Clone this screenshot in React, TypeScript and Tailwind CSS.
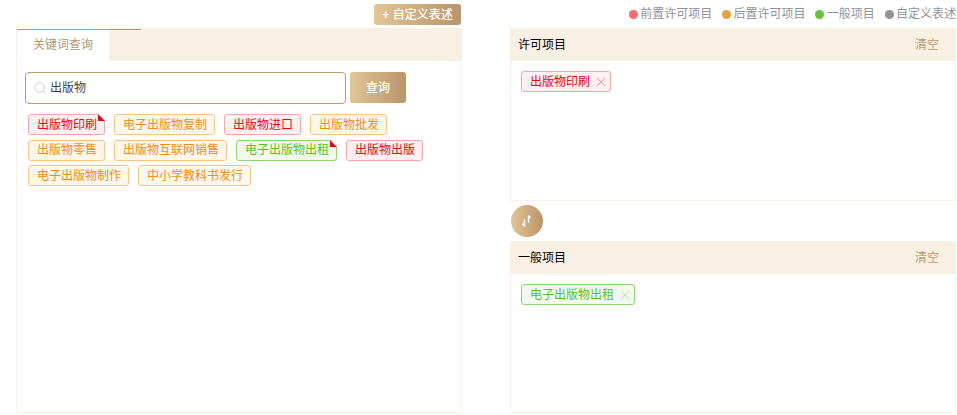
type Tone = 'red' | 'orange' | 'green';

const toneClass: Record<Tone, string> = {
  red: 'border-[#fda4ab] bg-[#fff0f1] text-[#f5000f]',
  orange: 'border-[#fcc587] bg-[#fff6ec] text-[#f28c12]',
  green: 'border-[#8fd66f] bg-[#f2faee] text-[#52c41a]',
};

const results: { label: string; tone: Tone; marked?: boolean }[] = [
  { label: '出版物印刷', tone: 'red', marked: true },
  { label: '电子出版物复制', tone: 'orange' },
  { label: '出版物进口', tone: 'red' },
  { label: '出版物批发', tone: 'orange' },
  { label: '出版物零售', tone: 'orange' },
  { label: '出版物互联网销售', tone: 'orange' },
  { label: '电子出版物出租', tone: 'green', marked: true },
  { label: '出版物出版', tone: 'red' },
  { label: '电子出版物制作', tone: 'orange' },
  { label: '中小学教科书发行', tone: 'orange' },
];

const legend = [
  { label: '前置许可项目', dot: 'bg-[#f56c6c]' },
  { label: '后置许可项目', dot: 'bg-[#e6a23c]' },
  { label: '一般项目', dot: 'bg-[#67c23a]' },
  { label: '自定义表述', dot: 'bg-[#909399]' },
];

function Tag({ label, tone, marked }: { label: string; tone: Tone; marked?: boolean }) {
  return (
    <span className={`relative flex h-[21px] items-center rounded-[3px] border pl-2 pr-[7px] text-xs leading-none ${toneClass[tone]}`}>
      {label}
      {marked && (
        <svg width="7" height="7" viewBox="0 0 7 7" className="absolute -right-px -top-px">
          <polygon points="0,0 7,0 7,7" fill="#fff" />
          <polygon points="0,0 7,7 0,7" fill="#f00010" />
        </svg>
      )}
    </span>
  );
}

function PickedTag({ label, tone }: { label: string; tone: Tone }) {
  return (
    <span className={`flex h-[21px] w-fit items-center rounded-[3px] border pl-2 pr-1 text-xs leading-none ${toneClass[tone]}`}>
      {label}
      <svg width="10" height="10" viewBox="0 0 10 10" fill="none" stroke="currentColor" strokeWidth="1" className="ml-[6px] opacity-40">
        <path d="M1 1l8 8M9 1L1 9" />
      </svg>
    </span>
  );
}

function Panel({ title, className, children }: { title: string; className: string; children: React.ReactNode }) {
  return (
    <div className={`border border-t-0 border-[#fbf1e7] ${className}`}>
      <div className="-mx-px flex h-[33px] items-center justify-between bg-[#f8f0e3] pl-2 pr-[17px] text-xs text-black">
        <span>{title}</span>
        <span className="text-[#c09a6e]">清空</span>
      </div>
      <div className="px-[10px] pt-[10px]">{children}</div>
    </div>
  );
}

export default function App() {
  return (
    <div className="flex h-[415px] w-[957px] bg-white pl-4 font-['Liberation_Sans','Noto_Sans_CJK_SC',sans-serif]">
      <div className="flex w-[446px] flex-col">
        <div className="flex h-7 justify-end pr-px pt-1">
          <button className="h-[21px] w-[87px] rounded-[3px] bg-gradient-to-r from-[#e2c696] to-[#ba946a] text-xs font-medium leading-none text-white">
            <span className="font-bold">+</span> 自定义表述
          </button>
        </div>
        <div className="flex h-[385px] flex-col border border-t-0 border-[#fbf1e7]">
          <div className="-mx-px flex h-[33px] bg-[#f8f0e3]">
            <div className="relative ml-px flex w-[92px] items-center justify-center bg-white text-xs text-[#b4966f]">
              关键词查询
              <span className="absolute left-0 top-px h-px w-[124px] bg-[#c09a6e]" />
            </div>
          </div>
          <div className="flex gap-1 px-2 pt-[11px]">
            <div className="flex h-[32px] w-[321px] items-center rounded-[4px] border border-[#c09a6e] pl-2 text-xs text-[#444]">
              <svg width="12" height="12" viewBox="0 0 12 12" fill="none" stroke="#c8ccd4" strokeWidth="1" className="mr-1">
                <circle cx="5.5" cy="5.5" r="4.7" />
                <path d="M9 9l2 2" />
              </svg>
              出版物
            </div>
            <button className="h-[31px] w-14 rounded-[3px] bg-gradient-to-r from-[#e2c696] to-[#ba946a] text-xs font-medium text-white">
              查询
            </button>
          </div>
          <div className="flex flex-wrap gap-x-[9px] gap-y-[4.5px] px-[11px] pt-[10px]">
            {results.map(r => (
              <Tag key={r.label} {...r} />
            ))}
          </div>
        </div>
      </div>

      <div className="ml-12 flex w-[446px] flex-col">
        <div className="flex h-7 items-start justify-end gap-[10px] pt-[6px] text-xs leading-[16px] text-[#909399]">
          {legend.map(l => (
            <span key={l.label} className="flex items-center gap-[2.25px]">
              <span className={`h-[9px] w-[9px] rounded-full ${l.dot}`} />
              {l.label}
            </span>
          ))}
        </div>
        <Panel title="许可项目" className="h-[173px]">
          <PickedTag label="出版物印刷" tone="red" />
        </Panel>
        <div className="flex h-[40px] items-center pl-px">
          <div className="flex h-8 w-8 items-center justify-center rounded-full bg-gradient-to-r from-[#e2c696] to-[#ba946a]">
            <svg width="12" height="12" viewBox="0 0 12 12" fill="none" stroke="#fff" strokeWidth="1.3">
              <path d="M3.5 4v7L1.5 8.5M7.5 0.5V8M7.5 0.5L9.5 3" />
            </svg>
          </div>
        </div>
        <Panel title="一般项目" className="h-[172px]">
          <PickedTag label="电子出版物出租" tone="green" />
        </Panel>
      </div>
    </div>
  );
}
